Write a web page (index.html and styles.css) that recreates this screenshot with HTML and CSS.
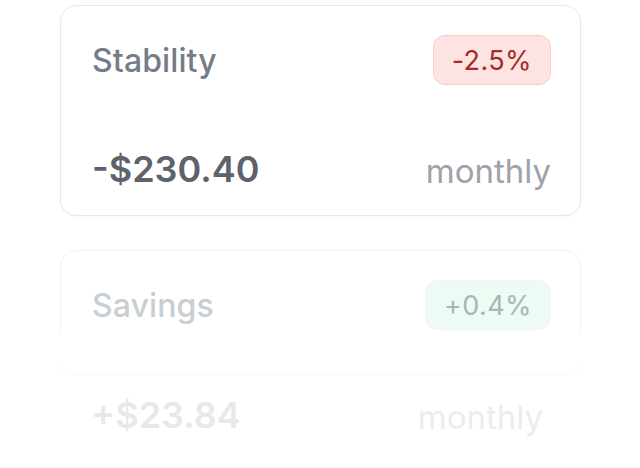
FILE: index.html
```html
<!DOCTYPE html>
<html>
<head>
<meta charset="utf-8">
<link rel="stylesheet" href="styles.css">
</head>
<body>
<div class="stack">
  <div class="card">
    <div class="row">
      <span class="title">Stability</span>
      <span class="badge badge-red">-2.5%</span>
    </div>
    <div class="row">
      <span class="amount">-$230.40</span>
      <span class="period">monthly</span>
    </div>
  </div>
  <div class="ghost">
    <div class="card card-faded">
      <div class="row">
        <span class="title">Savings</span>
        <span class="badge badge-green">+0.4%</span>
      </div>
    </div>
    <div class="veil"></div>
    <div class="row ghost-row">
      <span class="amount">+$23.84</span>
      <span class="period">monthly</span>
    </div>
  </div>
</div>
</body>
</html>
```
FILE: styles.css
```css
html, body {
  margin: 0;
  padding: 0;
  background: #ffffff;
}
body {
  font-family: Inter, "Noto Sans", sans-serif;
  width: 640px;
  height: 468px;
  overflow: hidden;
}
.stack {
  display: flex;
  flex-direction: column;
  gap: 34px;
  padding: 5px 0 0 60px;
  width: 521px;
}
.card {
  box-sizing: border-box;
  height: 211px;
  border: 1.5px solid #e7e8eb;
  border-radius: 16px;
  padding: 29px 29px 24px 31px;
  display: flex;
  flex-direction: column;
  justify-content: space-between;
  background: #fff;
  box-shadow: 0 1px 2px rgba(0,0,0,0.03);
}
.row {
  display: flex;
  justify-content: space-between;
  align-items: center;
}
.title {
  font-size: 32px;
  font-weight: 500;
  color: #767c87;
  letter-spacing: 0.1px;
}
.badge {
  box-sizing: border-box;
  height: 50px;
  display: flex;
  align-items: center;
  padding: 0 18px;
  border-radius: 12px;
  font-size: 27px;
  font-weight: 400;
  letter-spacing: 0.4px;
}
.badge-red {
  background: #fee3e3;
  border: 1.5px solid #fccccc;
  color: #a62a2a;
}
.amount {
  font-size: 36px;
  font-weight: 600;
  color: #5d626b;
}
.period {
  font-size: 33px;
  font-weight: 400;
  color: #9ea2aa;
  margin-top: 4px;
}
.ghost {
  position: relative;
}
.card-faded {
  height: 125px;
  border-color: #f1f2f4;
  box-shadow: none;
  justify-content: flex-start;
}
.card-faded .title {
  color: #c8ced1;
}
.badge-green {
  background: #edfbf4;
  border: 1px solid #f0f6f3;
  color: #a3bab2;
}
.veil {
  position: absolute;
  left: 0;
  right: 0;
  top: 82px;
  height: 42px;
  background: #fff;
  border-bottom: 1px solid #f7f7f8;
  border-radius: 0 0 14px 14px;
}
.ghost-row {
  padding: 18px 38px 0 31px;
  opacity: 0.2;
}
.ghost-row .amount {
  color: #8a9098;
}
```
